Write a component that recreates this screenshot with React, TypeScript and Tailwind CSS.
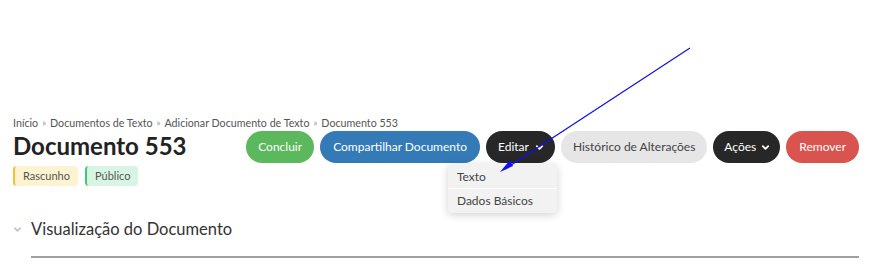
import React from "react";

function Chevron({ className }: { className?: string }) {
  return (
    <svg viewBox="0 0 10 10" className={className} fill="none" stroke="currentColor" strokeWidth="2" strokeLinecap="round" strokeLinejoin="round">
      <path d="M2 3.5 L5 6.5 L8 3.5" />
    </svg>
  );
}

export default function App() {
  return (
    <div className="relative w-[874px] h-[270px] bg-white overflow-hidden text-[#333] whitespace-nowrap" style={{ fontFamily: "Lato, 'Open Sans', sans-serif" }}>
      <div className="pt-[116px] pl-[13px] pr-[15px]">
        <div className="flex items-center gap-[4px] text-[10.7px] text-[#555] leading-[14px]">
          <span>Início</span>
          <span className="text-[#999] text-[9px]">»</span>
          <span>Documentos de Texto</span>
          <span className="text-[#999] text-[9px]">»</span>
          <span>Adicionar Documento de Texto</span>
          <span className="text-[#999] text-[9px]">»</span>
          <span>Documento 553</span>
        </div>
        <div className="flex items-start justify-between">
          <div className="shrink-0">
            <h1 className="text-[24px] font-bold leading-[30px] text-[#222] mt-[1px]">Documento 553</h1>
            <div className="flex gap-[7px] mt-[5px] text-[11px] leading-[20px]">
              <span className="px-[8px] bg-[#fdf3d0] border-l-2 border-[#f0c030] rounded-[4px] text-[#555]">Rascunho</span>
              <span className="px-[8px] bg-[#d8f5e3] border-l-2 border-[#3cc878] rounded-[4px] text-[#555]">Público</span>
            </div>
          </div>
          <div className="flex gap-[6px] mt-[1px] text-[12px] shrink-0">
            <button className="h-[32px] px-[12px] rounded-full bg-[#5cb85c] text-white">Concluir</button>
            <button className="h-[32px] px-[13px] rounded-full bg-[#337ab7] text-white">Compartilhar Documento</button>
            <div className="relative">
              <button className="h-[32px] pl-[12px] pr-[11px] rounded-full bg-[#272727] text-white flex items-center gap-[6px]">
                Editar
                <Chevron className="w-[9px] h-[9px]" />
              </button>
              <div className="absolute right-[-2px] top-[33px] w-[109px] bg-[#f2f2f2] rounded-[4px] shadow-[0_2px_8px_rgba(0,0,0,0.18)] text-[12px] text-[#444]">
                <div className="h-[25px] leading-[25px] px-[9px] border-b border-white">Texto</div>
                <div className="h-[24px] leading-[24px] px-[9px]">Dados Básicos</div>
              </div>
            </div>
            <button className="h-[32px] px-[12px] rounded-full bg-[#e6e6e6] text-[#444]">Histórico de Alterações</button>
            <button className="h-[32px] pl-[11px] pr-[10px] rounded-full bg-[#272727] text-white flex items-center gap-[5px]">
              Ações
              <Chevron className="w-[9px] h-[9px]" />
            </button>
            <button className="h-[32px] px-[13px] rounded-full bg-[#d9534f] text-white">Remover</button>
          </div>
        </div>
        <div className="mt-[32px] flex items-center gap-[9px]">
          <Chevron className="w-[9px] h-[9px] text-[#c4c4c4]" />
          <span className="text-[16.5px] leading-[22px] text-[#333]">Visualização do Documento</span>
        </div>
        <div className="ml-[18px] mt-[16px] h-[2px] bg-[#a0a0a0]" />
      </div>
      <svg className="absolute inset-0 pointer-events-none" width="874" height="270">
        <line x1="690" y1="48" x2="505" y2="169" stroke="#1010f0" strokeWidth="1.2" />
        <path d="M500 172 L510 160 L513 166 Z" fill="#1010f0" />
      </svg>
    </div>
  );
}
